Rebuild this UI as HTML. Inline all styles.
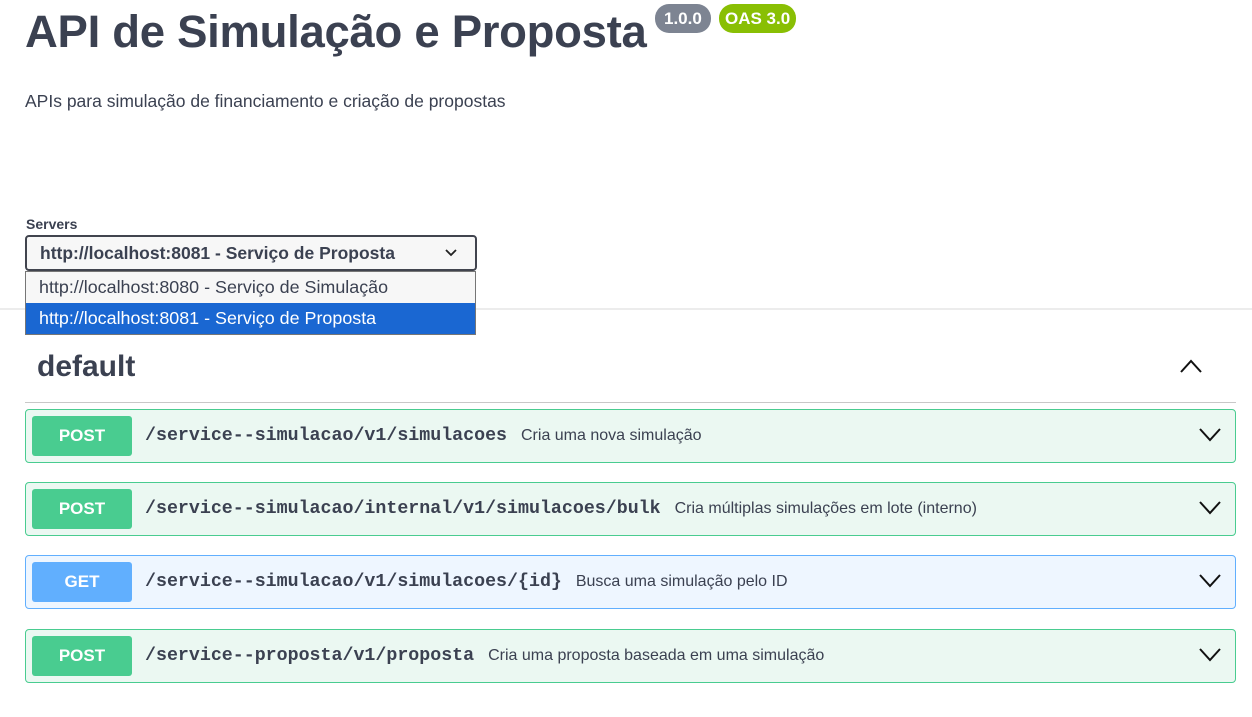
<!DOCTYPE html>
<html><head><meta charset="utf-8"><style>
*{box-sizing:border-box;margin:0;padding:0}
body{width:1252px;height:717px;overflow:hidden;background:#fff;font-family:"Liberation Sans",sans-serif;color:#3b4151;position:relative}
.abs{position:absolute}
h1{position:absolute;left:25px;top:6px;font-size:45.5px;font-weight:bold;color:#3b4151;white-space:nowrap;letter-spacing:-0.3px}
.badge{position:absolute;top:4px;height:29px;border-radius:14px;color:#fff;font-weight:bold;font-size:17px;line-height:29px;padding:0 6px;white-space:nowrap}
.desc{left:25px;top:91px;font-size:17.5px}
.hr{left:0;top:308px;width:1252px;height:2px;background:#ececec}
.srvl{left:26px;top:216px;font-size:14px;font-weight:bold}
.sel{left:25px;top:235px;width:452px;height:36px;border:2px solid #41444e;border-radius:4px;background:#f7f7f7;font-weight:bold;font-size:17.5px;padding:6px 0 0 13px;color:#3b4151;white-space:nowrap}
.dd{left:25px;top:271px;width:451px;height:64px;border:1px solid #767676;background:#f7f7f7;font-size:17.9px;white-space:nowrap}
.dd div{height:31px;line-height:31px;padding-left:13px;color:#3b4151}
.dd .on{background:#1a67d2;color:#fff}
.def{left:37px;top:350px;font-size:30px;font-weight:bold}
.line2{left:25px;top:402px;width:1211px;height:1px;background:#c8c8c8}
.op{position:absolute;left:25px;width:1211px;height:54px;border:1px solid #49cc90;background:#ebf8f2;border-radius:4px}
.op.get{border-color:#61affe;background:#eef6ff}
.m{position:absolute;left:6px;top:6px;width:100px;height:40px;border-radius:3px;background:#49cc90;color:#fff;font-weight:bold;font-size:17px;text-align:center;line-height:40px}
.get .m{background:#61affe}
.p{position:absolute;left:119px;top:16px;font-family:"Liberation Mono",monospace;font-weight:bold;font-size:18.3px;color:#3b4151;white-space:nowrap}
.p span{font-family:"Liberation Sans",sans-serif;font-weight:normal;font-size:16px;margin-left:3px}
.ch{position:absolute;right:14px;top:18px}
</style></head><body>
<h1>API de Simulação e Proposta</h1>
<div class="badge" style="left:655px;background:#7d8492;padding:0 9px">1.0.0</div>
<div class="badge" style="left:719px;background:#89bf04">OAS 3.0</div>
<div class="abs desc">APIs para simulação de financiamento e criação de propostas</div>
<div class="abs hr"></div>
<div class="abs srvl">Servers</div>
<div class="abs sel">http://localhost:8081 - Serviço de Proposta
<svg class="abs" style="left:418px;top:12px" width="12" height="8" viewBox="0 0 12 8"><path d="M1 1l5 5 5-5" fill="none" stroke="#222" stroke-width="1.8"/></svg></div>
<div class="abs dd"><div>http://localhost:8080 - Serviço de Simulação</div><div class="on">http://localhost:8081 - Serviço de Proposta</div></div>
<div class="abs def">default</div>
<svg class="abs" style="left:1180px;top:359px" width="22" height="14" viewBox="0 0 22 14"><path d="M1 13L11 2l10 11" fill="none" stroke="#111" stroke-width="2"/></svg>
<div class="abs line2"></div>
<div class="op" style="top:409px"><div class="m">POST</div><div class="p">/service--simulacao/v1/simulacoes <span>Cria uma nova simulação</span></div><svg class="ch" width="22" height="14" viewBox="0 0 22 14"><path d="M1 1l10 11L21 1" fill="none" stroke="#111" stroke-width="2"/></svg></div>
<div class="op" style="top:482px"><div class="m">POST</div><div class="p">/service--simulacao/internal/v1/simulacoes/bulk <span>Cria múltiplas simulações em lote (interno)</span></div><svg class="ch" width="22" height="14" viewBox="0 0 22 14"><path d="M1 1l10 11L21 1" fill="none" stroke="#111" stroke-width="2"/></svg></div>
<div class="op get" style="top:555px"><div class="m">GET</div><div class="p">/service--simulacao/v1/simulacoes/{id} <span>Busca uma simulação pelo ID</span></div><svg class="ch" width="22" height="14" viewBox="0 0 22 14"><path d="M1 1l10 11L21 1" fill="none" stroke="#111" stroke-width="2"/></svg></div>
<div class="op" style="top:629px"><div class="m">POST</div><div class="p">/service--proposta/v1/proposta <span>Cria uma proposta baseada em uma simulação</span></div><svg class="ch" width="22" height="14" viewBox="0 0 22 14"><path d="M1 1l10 11L21 1" fill="none" stroke="#111" stroke-width="2"/></svg></div>
</body></html>
